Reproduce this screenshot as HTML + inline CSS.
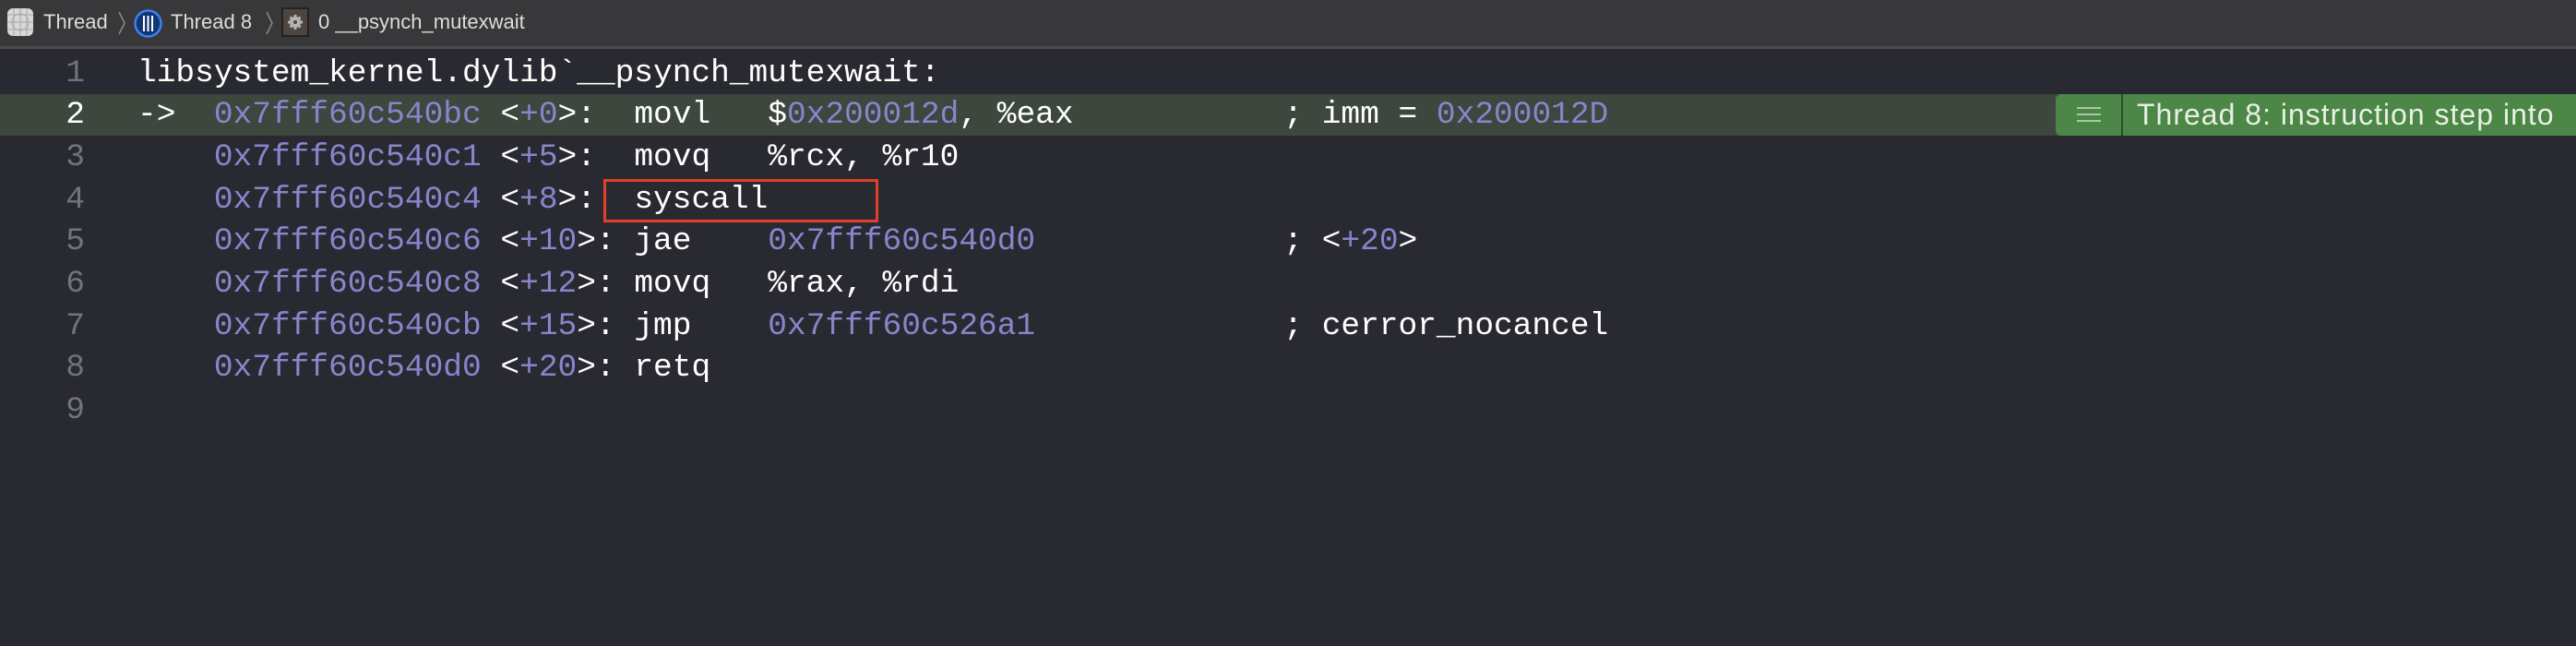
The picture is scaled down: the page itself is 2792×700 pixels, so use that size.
<!DOCTYPE html>
<html><head><meta charset="utf-8"><style>
html,body{margin:0;padding:0;}
body{width:2792px;height:700px;background:#292a31;position:relative;overflow:hidden;font-family:"Liberation Mono",monospace;}
.hdr{position:absolute;left:0;top:0;width:2792px;height:50px;background:#38383b;border-bottom:3px solid #4b4b4e;}
.hdr span.t{position:absolute;top:11px;font:22px "Liberation Sans",sans-serif;color:#dcdcdc;}
.chev{position:absolute;top:12px;}
.ln{position:absolute;left:0;width:92px;text-align:right;font-size:34.5px;color:#737479;}
.code{position:absolute;left:149px;font-size:34.5px;color:#ffffff;white-space:pre;}
.row{position:absolute;left:0;width:2792px;height:46px;line-height:46px;}
.p{color:#8b84cc;}
</style></head><body>
<div class="hdr">
 <svg style="position:absolute;left:7px;top:8px" width="30" height="32" viewBox="0 0 30 32"><rect x="1" y="1" width="28" height="30" rx="6" fill="#d8d8d8"/><g stroke="#a8a8a8" stroke-width="1" fill="none"><path d="M1 8H29M1 16H29M1 24H29M8 1V31M15 1V31M22 1V31"/><circle cx="15" cy="16" r="9"/></g></svg>
 <span class="t" style="left:47px">Thread</span>
 <svg class="chev" style="left:127px" width="10" height="26"><path d="M2 1L8 13L2 25" stroke="#8a8a8a" stroke-width="1.5" fill="none"/></svg>
 <svg style="position:absolute;left:145px;top:10px" width="31" height="31" viewBox="0 0 31 31"><circle cx="15.5" cy="15.5" r="14" fill="#143670" stroke="#3b82f0" stroke-width="2.5"/><path d="M11 7V24M15.5 7V24M20 7V24" stroke="#fff" stroke-width="2"/></svg>
 <span class="t" style="left:185px">Thread 8</span>
 <svg class="chev" style="left:287px" width="10" height="26"><path d="M2 1L8 13L2 25" stroke="#8a8a8a" stroke-width="1.5" fill="none"/></svg>
 <svg style="position:absolute;left:305px;top:8px" width="30" height="32" viewBox="0 0 30 32"><rect x="1" y="1" width="28" height="30" fill="#4e463e" stroke="#222" stroke-width="2"/><circle cx="15" cy="16" r="6" fill="#b4b4b4"/><path d="M15 8V24M7 16H23M9.5 10.5L20.5 21.5M20.5 10.5L9.5 21.5" stroke="#b4b4b4" stroke-width="3"/><circle cx="15" cy="16" r="2" fill="#4e463e"/></svg>
 <span class="t" style="left:345px">0 __psynch_mutexwait</span>
</div>

<div class="row" style="top:102px;height:45px;background:#3d473e"></div>
<div style="position:absolute;left:2228px;top:102px;width:564px;height:45px;background:#4c8747;border-radius:6px 0 0 6px"></div>
<div style="position:absolute;left:2299px;top:102px;width:2px;height:45px;background:#2f4b2e"></div>
<div style="position:absolute;left:2251px;top:116px;width:26px;">
 <div style="height:2px;background:#a9c7a4;margin-bottom:5px"></div><div style="height:2px;background:#a9c7a4;margin-bottom:5px"></div><div style="height:2px;background:#a9c7a4"></div></div>
<div style="position:absolute;left:2316px;top:102px;height:45px;font-family:'Liberation Sans',sans-serif;font-size:32px;line-height:45px;letter-spacing:1px;color:#e8f0e4;white-space:nowrap">Thread 8: instruction step into</div>

<div class="row" style="top:57px"><span class="ln">1</span><span class="code">libsystem_kernel.dylib`__psynch_mutexwait:</span></div>
<div class="row" style="top:102px"><span class="ln" style="color:#fff">2</span><span class="code">-&gt;  <span class="p">0x7fff60c540bc</span> &lt;<span class="p">+0</span>&gt;:  movl   $<span class="p">0x200012d</span>, %eax           ; imm = <span class="p">0x200012D</span></span></div>
<div class="row" style="top:148px"><span class="ln">3</span><span class="code">    <span class="p">0x7fff60c540c1</span> &lt;<span class="p">+5</span>&gt;:  movq   %rcx, %r10</span></div>
<div class="row" style="top:194px"><span class="ln">4</span><span class="code">    <span class="p">0x7fff60c540c4</span> &lt;<span class="p">+8</span>&gt;:  syscall</span></div>
<div class="row" style="top:239px"><span class="ln">5</span><span class="code">    <span class="p">0x7fff60c540c6</span> &lt;<span class="p">+10</span>&gt;: jae    <span class="p">0x7fff60c540d0</span>             ; &lt;<span class="p">+20</span>&gt;</span></div>
<div class="row" style="top:285px"><span class="ln">6</span><span class="code">    <span class="p">0x7fff60c540c8</span> &lt;<span class="p">+12</span>&gt;: movq   %rax, %rdi</span></div>
<div class="row" style="top:331px"><span class="ln">7</span><span class="code">    <span class="p">0x7fff60c540cb</span> &lt;<span class="p">+15</span>&gt;: jmp    <span class="p">0x7fff60c526a1</span>             ; cerror_nocancel</span></div>
<div class="row" style="top:376px"><span class="ln">8</span><span class="code">    <span class="p">0x7fff60c540d0</span> &lt;<span class="p">+20</span>&gt;: retq</span></div>
<div class="row" style="top:422px"><span class="ln">9</span></div>

<div style="position:absolute;left:654px;top:194px;width:292px;height:41px;border:3px solid #e0402a"></div>
</body></html>
